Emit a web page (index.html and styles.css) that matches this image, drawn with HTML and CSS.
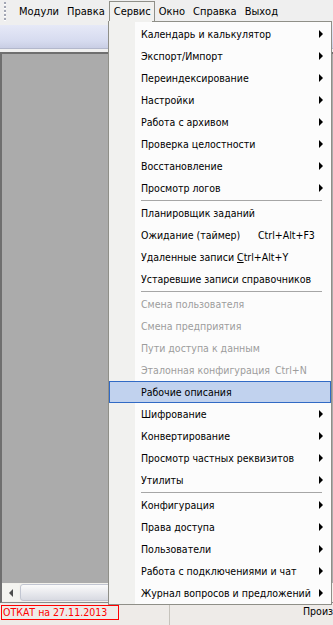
FILE: index.html
```html
<!DOCTYPE html>
<html lang="ru">
<head>
    <meta charset="UTF-8">
    <meta name="viewport" content="width=device-width, initial-scale=1.0">
    <title>Сервис</title>
    <link rel="stylesheet" href="styles.css">
</head>
<body>

    <div class="app">
        <div class="menubar">
            <span class="grip"></span>
            <span class="menu-title">Модули</span>
            <span class="menu-title">Правка</span>
            <span class="menu-title open">Сервис</span>
            <span class="menu-title">Окно</span>
            <span class="menu-title">Справка</span>
            <span class="menu-title">Выход</span>
        </div>

        <div class="toolbar">
            <span class="grip"></span>
        </div>

        <div class="workspace">
            <div class="client"></div>
            <div class="hscroll">
                <span class="scroll-btn"><span class="left-arrow"></span></span>
                <span class="thumb"></span>
            </div>
        </div>

        <div class="statusbar">
            <span class="panel warn">ОТКАТ на 27.11.2013</span>
            <span class="panel blank"></span>
            <span class="panel">Производство</span>
        </div>

        <!-- открытое меню "Сервис" -->
        <div class="dropdown">
            <div class="item"><span>Календарь и калькулятор</span><span></span><span class="arrow"></span></div>
            <div class="item"><span>Экспорт/Импорт</span><span></span><span class="arrow"></span></div>
            <div class="item"><span>Переиндексирование</span><span></span><span class="arrow"></span></div>
            <div class="item"><span>Настройки</span><span></span><span class="arrow"></span></div>
            <div class="item"><span>Работа с архивом</span><span></span><span class="arrow"></span></div>
            <div class="item"><span>Проверка целостности</span><span></span><span class="arrow"></span></div>
            <div class="item"><span>Восстановление</span><span></span><span class="arrow"></span></div>
            <div class="item"><span>Просмотр логов</span><span></span><span class="arrow"></span></div>
            <div class="sep"></div>
            <div class="item"><span>Планировщик заданий</span></div>
            <div class="item"><span>Ожидание (таймер)</span><span class="shortcut">Ctrl+Alt+F3</span></div>
            <div class="item"><span>Удаленные записи <u>C</u>trl+Alt+Y</span></div>
            <div class="item"><span>Устаревшие записи справочников</span></div>
            <div class="sep"></div>
            <div class="item disabled"><span>Смена пользователя</span></div>
            <div class="item disabled"><span>Смена предприятия</span></div>
            <div class="item disabled"><span>Пути доступа к данным</span></div>
            <div class="item disabled"><span>Эталонная конфигурация</span><span class="shortcut">Ctrl+N</span></div>
            <div class="item active"><span>Рабочие описания</span></div>
            <div class="item"><span>Шифрование</span><span></span><span class="arrow"></span></div>
            <div class="item"><span>Конвертирование</span><span></span><span class="arrow"></span></div>
            <div class="item"><span>Просмотр частных реквизитов</span><span></span><span class="arrow"></span></div>
            <div class="item"><span>Утилиты</span><span></span><span class="arrow"></span></div>
            <div class="sep"></div>
            <div class="item"><span>Конфигурация</span><span></span><span class="arrow"></span></div>
            <div class="item"><span>Права доступа</span><span></span><span class="arrow"></span></div>
            <div class="item"><span>Пользователи</span><span></span><span class="arrow"></span></div>
            <div class="item"><span>Работа с подключениями и чат</span><span></span><span class="arrow"></span></div>
            <div class="item"><span>Журнал вопросов и предложений</span><span></span><span class="arrow"></span></div>
        </div>
    </div>

</body>
</html>
```

FILE: styles.css
```css
body {
    margin: 0;
    width: 333px;
    height: 625px;
    overflow: hidden;
    font-family: "DejaVu Sans Condensed", "DejaVu Sans", sans-serif;
    font-stretch: condensed;
    font-size: 10.5px;
    color: #000;
    background: #eeece8;
}

.app {
    position: relative;
    display: flex;
    flex-direction: column;
    height: 625px;
}

/* dotted handle at the left of bars */
.grip {
    width: 2px;
    height: 19px;
    margin: 2px 9px 0 4px;
    background: repeating-linear-gradient(to bottom, #a2a6b4 0 2px, #ffffff 2px 3px, transparent 3px 4px);
}

.menubar {
    display: flex;
    align-items: flex-start;
    height: 25px;
    font-size: 11px;
    background: #efefef;
}

.menu-title {
    height: 20px;
    line-height: 20px;
    margin-top: 1px;
    padding: 0 3px;
    border: 1px solid transparent;
    border-bottom: none;
}

.menu-title.open {
    padding: 0 3px 0 4px;
    border-color: #8f8f88;
    background: #f1f1ef;
}

.toolbar {
    height: 23px;
    background: linear-gradient(to bottom, #e6e9f7, #d6dbef 70%, #c9cee4);
    border-bottom: 1px solid #b3b8cc;
}

.toolbar .grip {
    height: 20px;
}

.workspace {
    flex: 1;
    display: flex;
    flex-direction: column;
    padding-top: 3px;
    background: #f0f0f0;
}

.client {
    flex: 1;
    background: #ababab;
    border-top: 2px solid #6f6f6f;
    border-left: 2px solid #6f6f6f;
}

.hscroll {
    display: flex;
    height: 17px;
    padding: 1px 0;
    background: #f2f1ec;
    border-left: 2px solid #6f6f6f;
    border-bottom: 1px solid #8a8a8a;
}

.scroll-btn {
    width: 17px;
    display: flex;
    align-items: center;
    justify-content: center;
    background: #f4f4f0;
}

.left-arrow {
    width: 0;
    height: 0;
    border-right: 4px solid #4d4d4d;
    border-top: 4px solid transparent;
    border-bottom: 4px solid transparent;
}

.thumb {
    width: 160px;
    margin-left: 1px;
    border: 1px solid #c2c6d2;
    border-radius: 3px;
    background: linear-gradient(to bottom, #fbfbfb, #e6e7ec 60%, #d8dae2);
}

.statusbar {
    display: flex;
    align-items: flex-start;
    height: 22px;
    padding-top: 2px;
    box-sizing: border-box;
    overflow: hidden;
    background: #eeebe8;
}

.panel {
    flex-shrink: 0;
    height: 13px;
    line-height: 13px;
    white-space: nowrap;
}

.panel.warn {
    width: 115px;
    margin-left: 1px;
    padding-left: 1px;
    border: 1px solid #ff0000;
    color: #ff0000;
}

.panel.blank {
    width: 50px;
    height: 20px;
    border-right: 1px solid #c6c3bc;
}

.panel:last-child {
    margin-left: 133px;
}

/* dropdown menu */
.dropdown {
    position: absolute;
    top: 21px;
    left: 108px;
    width: 222px;
    padding-top: 1px;
    border: 1px solid #8f8f88;
    background: linear-gradient(to right, #f1f1ef 26px, #fcfcfc 26px);
}

.dropdown::before {
    content: "";
    position: absolute;
    top: -1px;
    left: 0;
    width: 43px;
    height: 1px;
    background: #f1f1ef;
}

.item {
    display: grid;
    grid-template-columns: minmax(112px, max-content) 1fr 4px;
    align-items: center;
    height: 22px;
    padding: 0 8px 0 32px;
    white-space: nowrap;
}

.shortcut {
    margin-left: 5px;
}

.item.disabled {
    color: #9c9c9c;
}

.item.active {
    background: #c1d2ee;
    box-shadow: inset 0 0 0 1px #316ac5;
}

.arrow {
    width: 0;
    height: 0;
    border-left: 4px solid #000;
    border-top: 4px solid transparent;
    border-bottom: 4px solid transparent;
}

.sep {
    height: 3px;
    margin: 0 9px 0 32px;
    background: linear-gradient(#a6a6a6, #a6a6a6) center / 100% 1px no-repeat;
}
```
